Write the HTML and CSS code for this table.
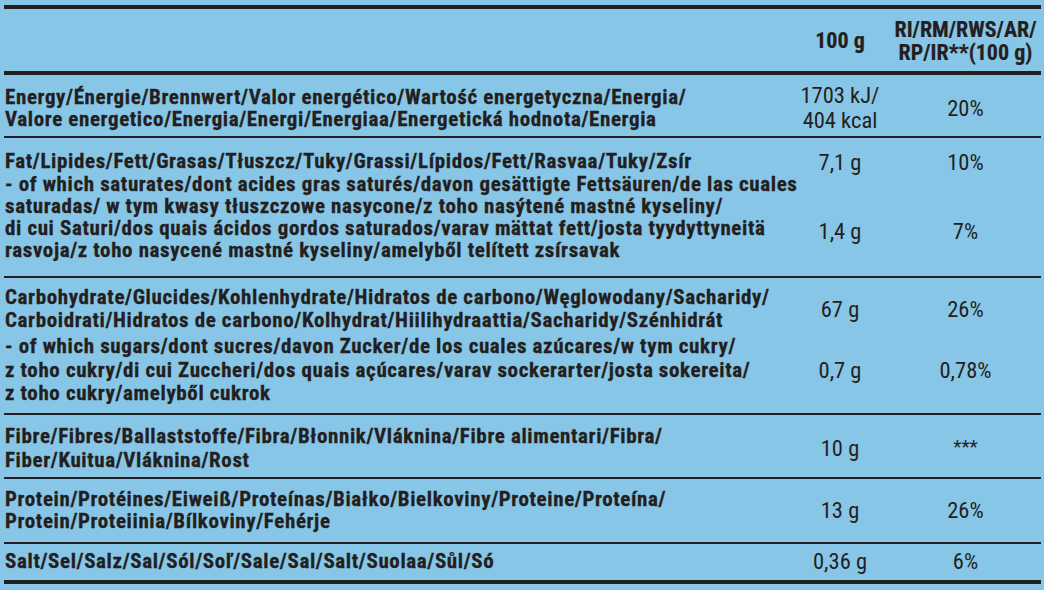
FILE: index.html
```html
<!DOCTYPE html>
<html>
<head>
<meta charset="utf-8">
<link rel="stylesheet" href="styles.css">
</head>
<body>
<div class="panel">
  <div class="rule thick"></div>
  <div class="sub head">
    <div class="lbl"></div>
    <div class="val">100 g</div>
    <div class="ri">RI/RM/RWS/AR/<br>RP/IR**(100 g)</div>
  </div>
  <div class="rule thick"></div>

  <section class="grp energy">
    <div class="sub">
      <div class="lbl">Energy/Énergie/Brennwert/Valor energético/Wartość energetyczna/Energia/<br>Valore energetico/Energia/Energi/Energiaa/Energetická hodnota/Energia</div>
      <div class="val">1703 kJ/<br>404 kcal</div>
      <div class="ri">20%</div>
    </div>
  </section>
  <div class="rule"></div>

  <section class="grp fat">
    <div class="sub">
      <div class="lbl">Fat/Lipides/Fett/Grasas/Tłuszcz/Tuky/Grassi/Lípidos/Fett/Rasvaa/Tuky/Zsír</div>
      <div class="val top">7,1 g</div>
      <div class="ri top">10%</div>
    </div>
    <div class="sub">
      <div class="lbl">- of which saturates/dont acides gras saturés/davon gesättigte Fettsäuren/de las cuales<br>saturadas/ w tym kwasy tłuszczowe nasycone/z toho nasýtené mastné kyseliny/<br>di cui Saturi/dos quais ácidos gordos saturados/varav mättat fett/josta tyydyttyneitä<br>rasvoja/z toho nasycené mastné kyseliny/amelyből telített zsírsavak</div>
      <div class="val low">1,4 g</div>
      <div class="ri low">7%</div>
    </div>
  </section>
  <div class="rule"></div>

  <section class="grp carb">
    <div class="sub">
      <div class="lbl">Carbohydrate/Glucides/Kohlenhydrate/Hidratos de carbono/Węglowodany/Sacharidy/<br>Carboidrati/Hidratos de carbono/Kolhydrat/Hiilihydraattia/Sacharidy/Szénhidrát</div>
      <div class="val">67 g</div>
      <div class="ri">26%</div>
    </div>
    <div class="sub sugars">
      <div class="lbl">- of which sugars/dont sucres/davon Zucker/de los cuales azúcares/w tym cukry/<br>z toho cukry/di cui Zuccheri/dos quais açúcares/varav sockerarter/josta sokereita/<br>z toho cukry/amelyből cukrok</div>
      <div class="val">0,7 g</div>
      <div class="ri">0,78%</div>
    </div>
  </section>
  <div class="rule"></div>

  <section class="grp fibre">
    <div class="sub">
      <div class="lbl">Fibre/Fibres/Ballaststoffe/Fibra/Błonnik/Vláknina/Fibre alimentari/Fibra/<br>Fiber/Kuitua/Vláknina/Rost</div>
      <div class="val">10 g</div>
      <div class="ri stars">***</div>
    </div>
  </section>
  <div class="rule"></div>

  <section class="grp protein">
    <div class="sub">
      <div class="lbl">Protein/Protéines/Eiweiß/Proteínas/Białko/Bielkoviny/Proteine/Proteína/<br>Protein/Proteiinia/Bílkoviny/Fehérje</div>
      <div class="val">13 g</div>
      <div class="ri">26%</div>
    </div>
  </section>
  <div class="rule"></div>

  <section class="grp salt">
    <div class="sub">
      <div class="lbl">Salt/Sel/Salz/Sal/Sól/Soľ/Sale/Sal/Salt/Suolaa/Sůl/Só</div>
      <div class="val">0,36 g</div>
      <div class="ri">6%</div>
    </div>
  </section>
  <div class="rule thick"></div>
</div>
</body>
</html>
```

FILE: styles.css
```css
html, body {
  margin: 0;
  padding: 0;
  background: #88c6e7;
}

body {
  width: 1044px;
  height: 590px;
  overflow: hidden;
  color: #231f20;
  font-family: "Roboto", "Liberation Sans", sans-serif;
  font-stretch: condensed;
}

.panel {
  margin: 5px 3px 0 4px;
  display: flex;
  flex-direction: column;
}

.rule {
  height: 2px;
  background: #231f20;
}

.rule.thick {
  height: 4px;
}

.sub {
  display: grid;
  grid-template-columns: 786px 100px 1fr;
  align-items: center;
}

.lbl {
  font-weight: 700;
  font-size: 21px;
  line-height: 22px;
  letter-spacing: 0.62px;
  padding-left: 1px;
  white-space: nowrap;
  -webkit-text-stroke: 0.3px #231f20;
}

.val, .ri {
  font-weight: 400;
  font-size: 22.5px;
  line-height: 24px;
  text-align: center;
  white-space: nowrap;
}

.head {
  height: 62px;
}

.head .val, .head .ri {
  font-weight: 700;
  font-size: 22px;
  line-height: 23px;
  -webkit-text-stroke: 0.2px #231f20;
}

.head .ri {
  padding-top: 1px;
}

.grp {
  display: flex;
  flex-direction: column;
  justify-content: flex-start;
  box-sizing: border-box;
}

.energy { height: 61px; padding-top: 8px; }
.fat { height: 138px; padding-top: 10px; }
.carb { height: 135px; padding-top: 8px; }
.fibre { height: 62px; padding-top: 9px; }
.protein { height: 63px; padding-top: 9px; }
.salt { height: 36px; padding-top: 5px; }

.energy .val {
  line-height: 25px;
}

.carb .lbl {
  line-height: 23px;
}

.carb .sugars {
  margin-top: 3px;
}

.carb .sugars .lbl {
  line-height: 23.5px;
}

.fibre .lbl {
  line-height: 24px;
}

.val.top, .ri.top {
  align-self: start;
  line-height: 22px;
  padding-top: 3px;
}

.val.low, .ri.low {
  align-self: start;
  line-height: 22px;
  padding-top: 47px;
}

.stars {
  font-size: 19px;
  padding-bottom: 2px;
}
```
